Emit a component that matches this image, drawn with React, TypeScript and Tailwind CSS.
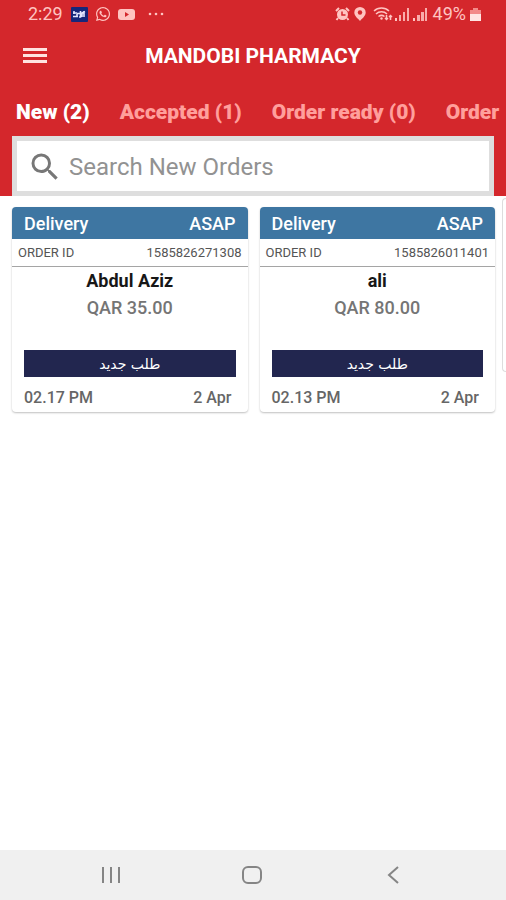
import { MdSearch } from "react-icons/md";
import { FaWhatsapp } from "react-icons/fa";

const tabs = ["New (2)", "Accepted (1)", "Order ready (0)", "Order"];

const orders = [
  {
    id: "1585826271308",
    name: "Abdul Aziz",
    price: "QAR 35.00",
    time: "02.17 PM",
    date: "2 Apr",
  },
  {
    id: "1585826011401",
    name: "ali",
    price: "QAR 80.00",
    time: "02.13 PM",
    date: "2 Apr",
  },
];

const Signal = ({ dense }: { dense?: boolean }) => (
  <svg width="15" height="13" viewBox="0 0 15 13" fill="currentColor">
    <rect x="0" y="10" width="2" height="3" />
    <rect x="4" y="7" width={dense ? 3 : 2} height="6" opacity="0.85" />
    <rect x="8" y="4" width={dense ? 3 : 2} height="9" opacity="0.85" />
    <rect x="12" y="0" width="2" height="13" opacity="0.85" />
  </svg>
);

const StatusBar = () => {
  return (
    <div className="flex h-7 items-center justify-between pr-[25px] pl-7 text-[#ffc4c1]">
      <div className="flex items-center">
        <span className="w-[43px] text-lg">2:29</span>
        <svg width="17" height="15" viewBox="0 0 17 15">
          <rect width="17" height="15" rx="1" fill="#17277a" />
          <path
            d="M2 6h4M3 4v3M2 9.500h5M6 7v2.500M6 6.500h4M9.500 4v6H8M11 10V6l3-1.500M13 4v6"
            fill="none"
            stroke="#e3e6ff"
            strokeWidth="1.600"
          />
        </svg>
        <FaWhatsapp className="ml-[7px] size-4" />
        <svg className="ml-[7px]" width="17" height="11" viewBox="0 0 17 11">
          <rect width="17" height="11" rx="3" fill="currentColor" />
          <path d="M7 3v5l4-2.500z" fill="#d4272c" />
        </svg>
        <svg className="ml-3" width="18" height="4" viewBox="0 0 18 4" fill="currentColor">
          <circle cx="3" cy="2" r="1.300" />
          <circle cx="9" cy="2" r="1.300" />
          <circle cx="15" cy="2" r="1.300" />
        </svg>
      </div>
      <div className="flex items-center">
        <svg width="15" height="14" viewBox="0 0 15 14">
          <path
            d="M1 4l3-3M14 4l-3-3M3 11l-1.500 2M12 11l1.500 2"
            stroke="currentColor"
            strokeWidth="2"
          />
          <circle cx="7.500" cy="7.500" r="5.500" fill="currentColor" />
          <path d="M7 4.500v3.500h3.500" fill="none" stroke="#d4272c" strokeWidth="1.500" />
        </svg>
        <svg className="ml-1" width="12" height="14" viewBox="0 0 12 14">
          <path
            d="M6 0a5.700 5.500 0 0 0-5.700 5.500C.3 9 4 11.500 6 14c2-2.500 5.700-5 5.700-8.500A5.700 5.500 0 0 0 6 0z"
            fill="currentColor"
          />
          <circle cx="6" cy="5.500" r="2.200" fill="#d4272c" />
        </svg>
        <svg className="ml-[7px]" width="20" height="14" viewBox="0 0 20 14">
          <g fill="none" stroke="currentColor" strokeWidth="1.500">
            <path d="M1 4c4-4 11-4 15 0" />
            <path d="M3 7c3-3 8-3 11 0" />
            <path d="M5.500 9.500c2-1.500 4-1.500 6 0" />
            <path d="M13.500 8v4.500M12 11l1.500 1.500L15 11M17.500 13V8.500M16 10l1.500-1.500L19 10" />
          </g>
          <circle cx="8.500" cy="11.500" r="1.200" fill="currentColor" />
        </svg>
        <div className="ml-[2px] flex gap-[3px]">
          <Signal />
          <Signal dense />
        </div>
        <span className="ml-[5px] text-lg">49%</span>
        <svg className="ml-1" width="11" height="13" viewBox="0 0 11 13">
          <path d="M3 0h5v2h3v11H0V2h3z" fill="#f28a89" />
          <path d="M0 6h11v7H0z" fill="#ffe5e3" />
        </svg>
      </div>
    </div>
  );
};

const OrderCard = ({ order }: { order: (typeof orders)[number] }) => {
  return (
    <article className="min-w-0 flex-1 overflow-hidden rounded bg-white shadow-[0_1px_2px_rgba(0,0,0,0.25)]">
      <div className="flex h-8 items-center justify-between bg-[#3e76a2] px-3 pt-[2px] text-lg font-medium text-white">
        <span>Delivery</span>
        <span>ASAP</span>
      </div>
      <div className="flex h-7 items-center justify-between border-b border-[#a5a5a5] px-[6px] text-[13px] text-[#555555]">
        <span>ORDER ID</span>
        <span>{order.id}</span>
      </div>
      <h2 className="mt-[2px] text-center text-lg leading-6 font-bold text-[#171717]">
        {order.name}
      </h2>
      <p className="mt-[3px] text-center text-lg leading-6 font-medium text-[#757575]">
        {order.price}
      </p>
      <button className="mx-3 mt-[30px] flex h-[27px] w-[calc(100%-24px)] items-center justify-center bg-[#22264f] text-sm text-white">
        <span dir="rtl" className="font-['DejaVu_Sans',sans-serif]">طلب جديد</span>
      </button>
      <div className="flex h-[35px] items-center justify-between pt-[6px] pr-4 pl-3 text-base font-medium text-[#666666]">
        <span>{order.time}</span>
        <span>{order.date}</span>
      </div>
    </article>
  );
};

export default function App() {
  return (
    <div className="flex min-h-screen flex-col overflow-hidden bg-white font-[Roboto,sans-serif]">
      <header className="bg-[#d4272c]">
        <StatusBar />
        <div className="grid h-14 grid-cols-[1fr_auto_1fr] items-center px-[23px]">
          <button aria-label="Menu" className="w-6 text-[#ffe3e1]">
            <svg width="24" height="16" viewBox="0 0 24 16" fill="currentColor">
              <path d="M0 0h24v3H0zM0 6h24v3H0zM0 12h24v3H0z" />
            </svg>
          </button>
          <h1 className="pt-[2px] text-[21px] font-bold text-white">MANDOBI PHARMACY</h1>
        </div>
        <nav className="flex h-[52px] items-center gap-[30px] overflow-hidden pt-[6px] pl-4">
          {tabs.map((tab, i) => (
            <button
              key={tab}
              className={
                i === 0
                  ? "shrink-0 text-[21px] font-black whitespace-nowrap text-white"
                  : "shrink-0 text-[21px] font-black whitespace-nowrap text-[#ff9f9c]"
              }
            >
              {tab}
            </button>
          ))}
        </nav>
        <div className="px-3">
          <label className="flex h-[60px] items-center border-[5px] border-[#dedede] bg-white pt-[2px] pl-[10px]">
            <MdSearch className="size-9 text-[#777777]" />
            <input
              type="text"
              aria-label="Search new orders"
              placeholder="Search New Orders"
              className="ml-[6px] min-w-0 flex-1 text-2xl outline-none placeholder:text-[#929292]"
            />
          </label>
        </div>
      </header>

      <main className="flex flex-1 items-start">
        <div className="flex min-w-0 flex-1 gap-3 pt-[11px] pr-[7px] pl-3">
          {orders.map((order) => (
            <OrderCard key={order.id} order={order} />
          ))}
        </div>
        <div className="mt-[2px] h-[174px] w-1 shrink-0 rounded-l border border-r-0 border-[#dddddd]" />
      </main>

      <footer className="grid h-[50px] grid-cols-3 items-center justify-items-center bg-[#f0f0f0] pr-[42px] pl-10 text-[#858585]">
        <button aria-label="Recent apps">
          <svg width="20" height="18" viewBox="0 0 20 18" stroke="currentColor" strokeWidth="2">
            <path d="M2 1v16M10 1v16M18 1v16" />
          </svg>
        </button>
        <button aria-label="Home">
          <svg width="22" height="18" viewBox="0 0 22 18" fill="none" stroke="currentColor" strokeWidth="2">
            <rect x="2" y="1" width="18" height="16" rx="5" />
          </svg>
        </button>
        <button aria-label="Back">
          <svg width="12" height="18" viewBox="0 0 12 18" fill="none" stroke="currentColor" strokeWidth="2">
            <path d="M11 1L2 9l9 8" />
          </svg>
        </button>
      </footer>
    </div>
  );
}
